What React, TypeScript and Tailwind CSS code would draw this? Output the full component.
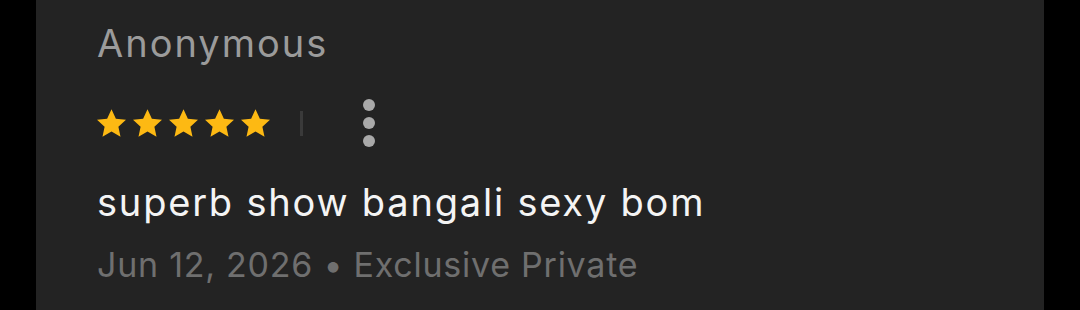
import { useState } from "react";

function Star() {
  return (
    <svg viewBox="1.7 1.8 20.6 19.4" className="w-[29px] h-[28px]" fill="#FDB913">
      <path d="M12 1.8l3.1 6.6 7.2.8-5.4 4.9 1.5 7.1L12 17.6l-6.4 3.6 1.5-7.1L1.7 9.2l7.2-.8z" />
    </svg>
  );
}

export default function App() {
  const [menuOpen, setMenuOpen] = useState(false);

  return (
    <div className="w-[1080px] h-[310px] bg-black flex" style={{ fontFamily: "Inter, 'Noto Sans', sans-serif" }}>
      <div className="ml-[36px] w-[1008px] h-full bg-[#232323] pl-[61px] pt-[21px]">
        <div className="text-[38px] leading-[44px] tracking-[2px] text-[#9b9b9b]">Anonymous</div>

        <div className="flex items-center mt-[34px] h-[48px]">
          <div className="flex gap-[7px]">
            {[0, 1, 2, 3, 4].map((i) => (
              <Star key={i} />
            ))}
          </div>
          <div className="w-[3px] h-[25px] bg-[#3a3a3a] ml-[30px]" />
          <button
            onClick={() => setMenuOpen(!menuOpen)}
            className="ml-[60px] flex flex-col gap-[6px] items-center"
          >
            <span className="w-[12px] h-[12px] rounded-full bg-[#a9a9a9]" />
            <span className="w-[12px] h-[12px] rounded-full bg-[#a9a9a9]" />
            <span className="w-[12px] h-[12px] rounded-full bg-[#a9a9a9]" />
          </button>
        </div>

        <div className="mt-[31px] text-[38px] leading-[48px] tracking-[1.8px] text-[#f4f4f4]">
          superb show bangali sexy bom
        </div>
        <div className="mt-[17px] text-[34px] leading-[44px] tracking-[0.75px] text-[#6f6f6f]">
          Jun 12, 2026 • Exclusive Private
        </div>
      </div>
    </div>
  );
}
